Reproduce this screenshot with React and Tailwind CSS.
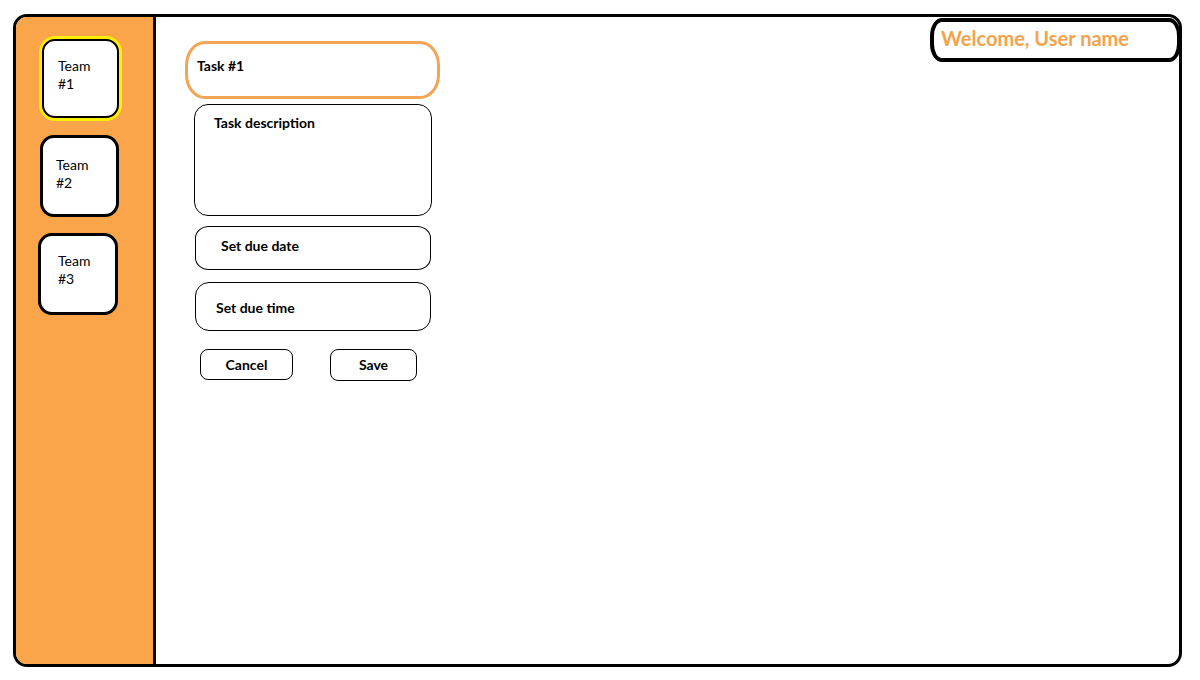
export default function App() {
  const font = { fontFamily: 'Lato, "Open Sans", sans-serif' };
  return (
    <div className="w-[1200px] h-[680px] bg-white pt-[14px] pl-[13px]" style={font}>
      <div className="w-[1169px] h-[653px] border-[3px] border-black rounded-[14px] flex overflow-hidden">
        <div className="w-[140px] shrink-0 bg-[#fba54a] border-r-[3px] border-black flex flex-col">
          <div className="mt-[19px] ml-[23px] w-[83px] h-[85px] rounded-[16px] border-[3px] border-[#ffee00] ">
            <div className="w-full h-full rounded-[13px] border-[2px] border-black bg-white pl-[14px] pt-[16px] text-[14px] leading-[18px] text-black">
              Team<br />#1
            </div>
          </div>
          <div className="mt-[14px] ml-[24px] w-[79px] h-[82px] rounded-[14px] border-[3px] border-black bg-white pl-[13px] pt-[18px] text-[14px] leading-[18px] text-black">
            Team<br />#2
          </div>
          <div className="mt-[16px] ml-[22px] w-[80px] h-[82px] rounded-[14px] border-[3px] border-black bg-white pl-[17px] pt-[16px] text-[14px] leading-[18px] text-black">
            Team<br />#3
          </div>
        </div>
        <div className="flex-1 flex justify-between">
          <div className="flex flex-col pt-[24px] pl-[29px]">
            <div className="w-[255px] h-[58px] rounded-[20px/24px] border-[3px] border-[#f3a454] pl-[9px] pt-[11px] text-[14px] font-bold text-black">
              Task #1
            </div>
            <div className="mt-[5px] ml-[9px] w-[238px] h-[112px] rounded-[14px] border border-black pl-[19px] pt-[7px] text-[14px] font-bold text-black">
              Task description
            </div>
            <div className="mt-[10px] ml-[10px] w-[236px] h-[44px] rounded-[14px/12px] border border-black pl-[25px] pt-[8px] text-[14px] font-bold text-black">
              Set due date
            </div>
            <div className="mt-[12px] ml-[10px] w-[236px] h-[49px] rounded-[14px/14px] border border-black pl-[20px] pt-[14px] text-[14px] font-bold text-black">
              Set due time
            </div>
            <div className="mt-[18px] ml-[15px] flex gap-[37px]">
              <div className="w-[93px] h-[31px] rounded-[8px] border border-black flex items-center justify-center text-[14px] font-bold text-black">
                Cancel
              </div>
              <div className="w-[87px] h-[32px] rounded-[8px] border border-black flex items-center justify-center pb-[2px] text-[14px] font-bold text-black">
                Save
              </div>
            </div>
          </div>
          <div className="mt-[1px] mr-[-2px] w-[251px] h-[44px] rounded-[12px/18px] border-[4px] border-black pl-[7px] pt-[1px] text-[20px] font-bold text-[#f5a34a]">
            Welcome, User name
          </div>
        </div>
      </div>
    </div>
  );
}
